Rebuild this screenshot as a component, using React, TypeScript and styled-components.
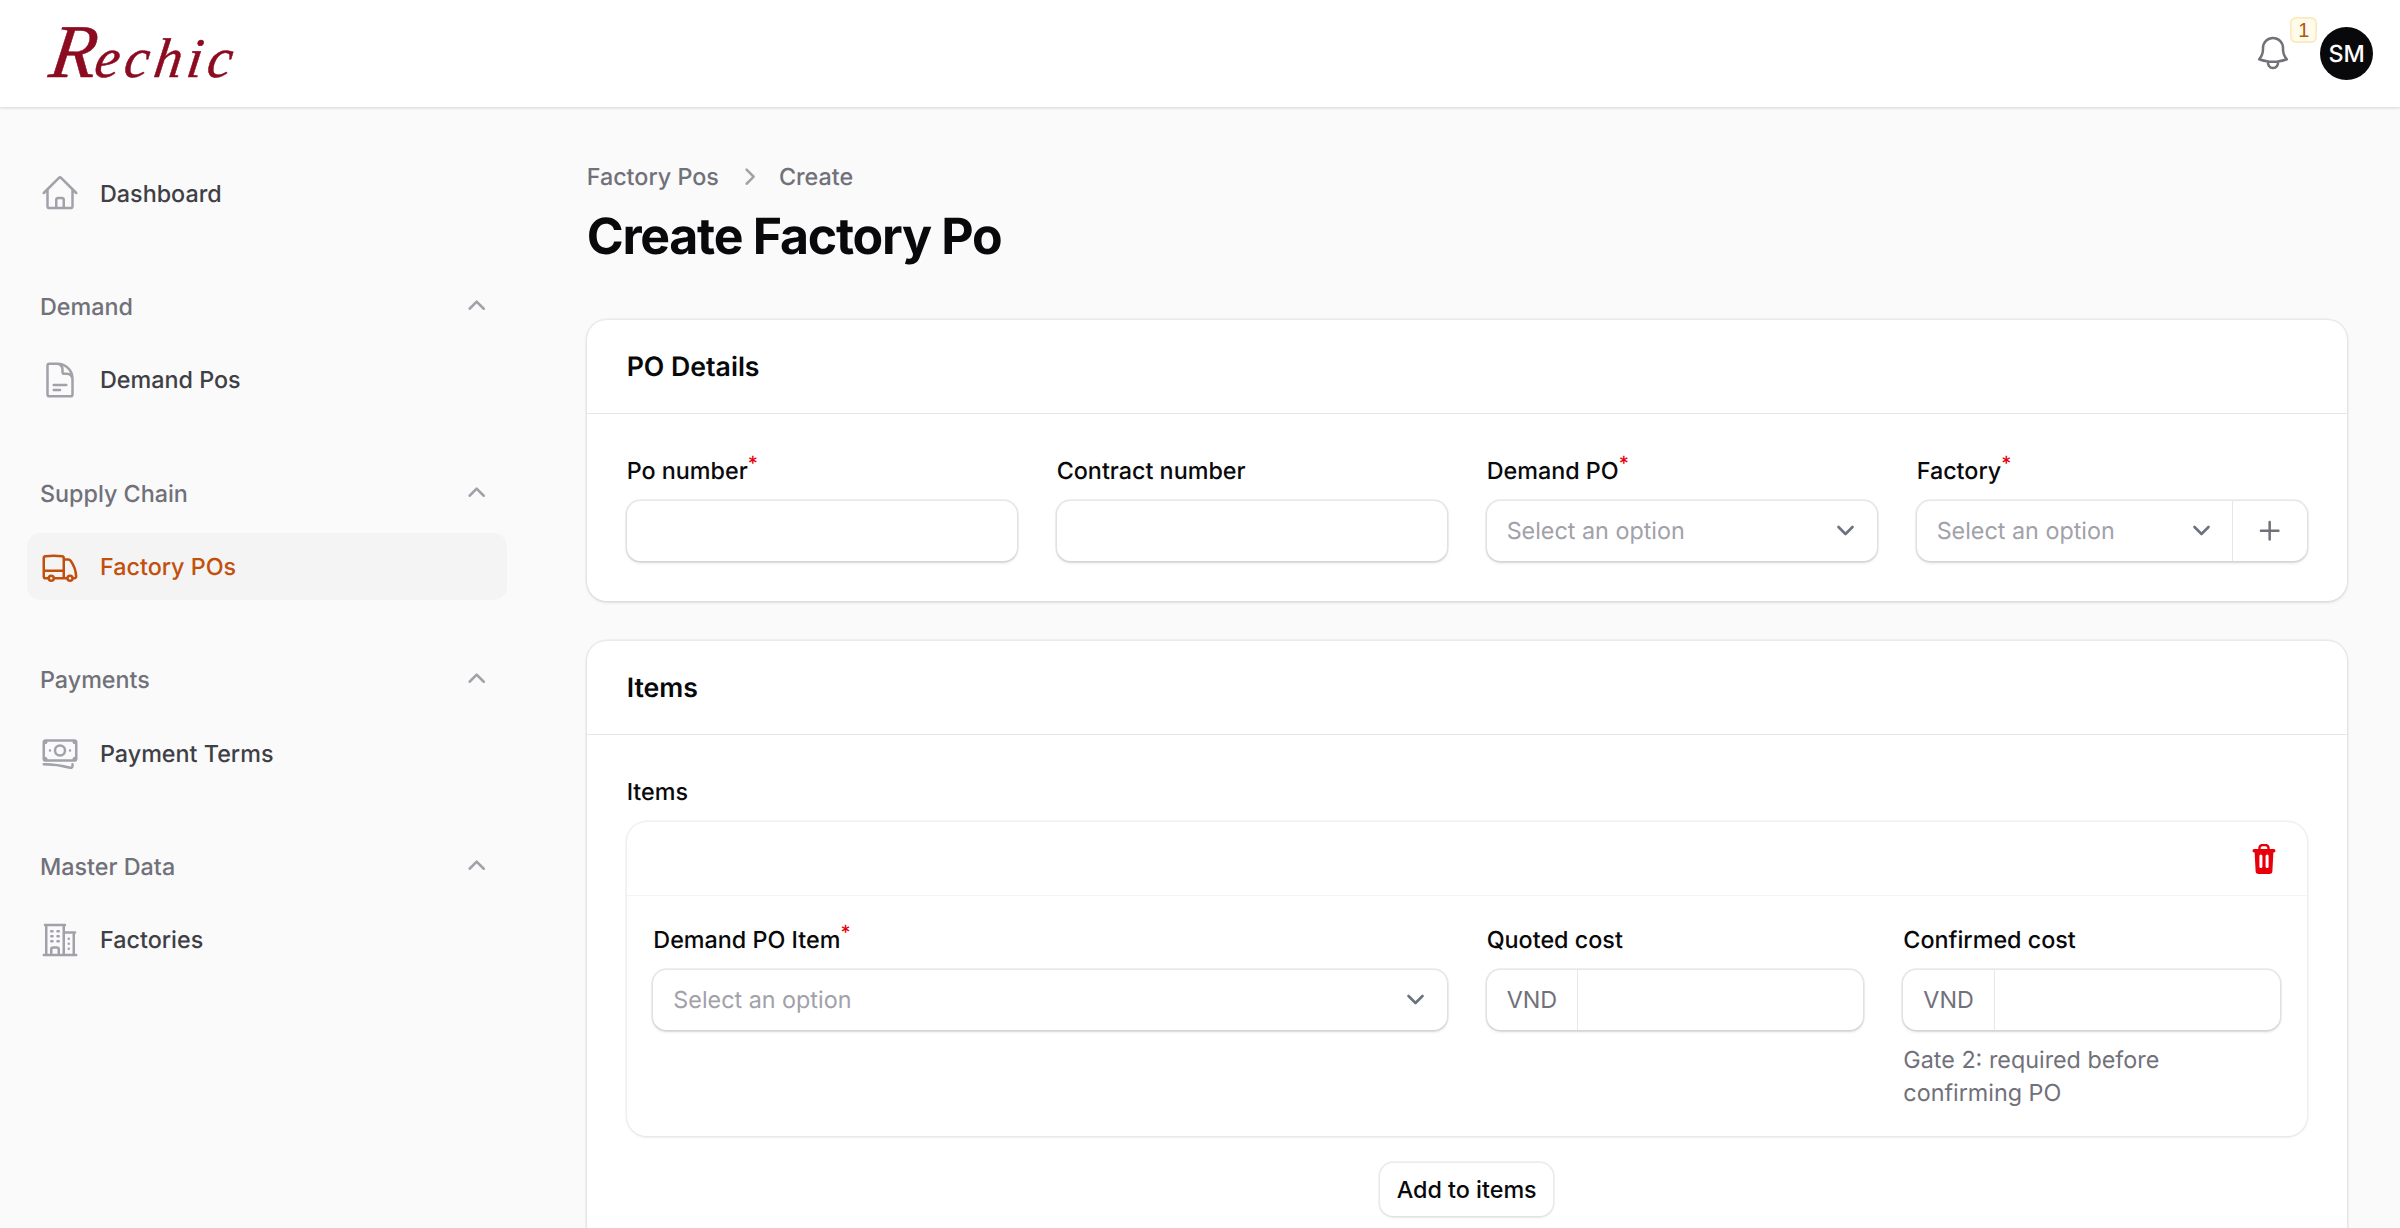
import React from 'react';
import styled, { createGlobalStyle } from 'styled-components';
import {
  HiOutlineHome,
  HiOutlineDocumentText,
  HiOutlineTruck,
  HiOutlineBanknotes,
  HiOutlineBuildingOffice2,
  HiOutlineBell,
  HiMiniChevronUp,
  HiMiniChevronRight,
  HiMiniPlus,
} from 'react-icons/hi2';

// The whole page is drawn at 5/3 scale, so 1rem here is 16 css px of the original.
const GlobalStyle = createGlobalStyle`
  html {
    font-size: 26.6667px;
  }
  body {
    margin: 0;
    background: #fafafa;
    font-family: Inter, "Noto Sans", sans-serif;
    color: #09090b;
    text-rendering: geometricPrecision;
    -webkit-font-smoothing: antialiased;
  }
  * {
    box-sizing: border-box;
  }
`;

const Page = styled.div`
  height: 100vh;
  overflow: hidden;
  display: flex;
  flex-direction: column;
`;

// Top bar with logo and the user actions.
const TopBar = styled.header`
  flex: none;
  height: 4rem;
  padding: 0 1rem 0 51px;
  display: flex;
  align-items: center;
  justify-content: space-between;
  background: white;
  box-shadow: 0 0 0 1.67px rgba(9, 9, 11, 0.05), 0 1.67px 3.3px rgba(0, 0, 0, 0.05);
  position: relative;
  z-index: 1;
`;

// No script face is installed, so the wordmark is set in a slanted serif with a tall capital.
const Logo = styled.span`
  display: flex;
  align-items: baseline;
  margin-top: -2px;
  font-family: "Liberation Serif", serif;
  font-style: italic;
  font-size: 56px;
  line-height: 1;
  letter-spacing: 4.8px;
  color: #8c0b20;
  -webkit-text-stroke: 0.5px #8c0b20;
  transform: skewX(-8deg);
`;

const LogoCapital = styled.span`
  font-size: 76px;
  letter-spacing: -1px;
`;

const TopActions = styled.div`
  display: flex;
  align-items: center;
  gap: 0.625rem;
`;

const BellButton = styled.button`
  position: relative;
  width: 2.25rem;
  height: 2.25rem;
  padding: 0;
  border: 0;
  background: none;
  display: flex;
  align-items: center;
  justify-content: center;
  color: #71717a;
  font-size: 1.5rem;
`;

const Badge = styled.span`
  position: absolute;
  top: -6px;
  right: -14px;
  width: 27px;
  height: 26px;
  display: flex;
  align-items: center;
  justify-content: center;
  border-radius: 6px;
  background: #fffbeb;
  box-shadow: inset 0 0 0 1.67px rgba(245, 158, 11, 0.2);
  color: #b45309;
  font-size: 0.75rem;
  font-weight: 500;
`;

const Avatar = styled.div`
  width: 2rem;
  height: 2rem;
  border-radius: 50%;
  background: #09090b;
  color: white;
  font-size: 0.875rem;
  font-weight: 500;
  display: flex;
  align-items: center;
  justify-content: center;
`;

const Body = styled.div`
  flex: 1;
  min-height: 0;
  display: flex;
`;

const Sidebar = styled.nav`
  flex: none;
  width: 20rem;
  padding: 2rem 1rem;
  display: flex;
  flex-direction: column;
  gap: 1.75rem;
`;

const NavGroup = styled.div`
  display: flex;
  flex-direction: column;
  gap: 0.25rem;
`;

const GroupLabel = styled.div`
  height: 2.5rem;
  padding-left: 0.5rem;
  display: flex;
  align-items: center;
  justify-content: space-between;
  font-size: 0.875rem;
  font-weight: 500;
  color: #71717a;
`;

const GroupToggle = styled.span`
  width: 2.25rem;
  display: flex;
  align-items: center;
  justify-content: center;
  font-size: 1.25rem;
  color: #a1a1aa;
`;

const NavItem = styled.a<{ $active?: boolean }>`
  height: 2.5rem;
  padding: 0 0.5rem;
  display: flex;
  align-items: center;
  gap: 0.75rem;
  border-radius: 0.5rem;
  font-size: 0.875rem;
  font-weight: 500;
  color: ${(p) => (p.$active ? '#c2500c' : '#3f3f46')};
  background: ${(p) => (p.$active ? '#f4f4f5' : 'transparent')};
  svg {
    flex: none;
    font-size: 1.5rem;
    color: ${(p) => (p.$active ? '#c2500c' : '#a1a1aa')};
  }
`;

const Main = styled.main`
  flex: 1;
  min-width: 0;
  padding: 2rem;
  display: flex;
  flex-direction: column;
`;

const Breadcrumbs = styled.div`
  display: flex;
  align-items: center;
  gap: 0.5rem;
  height: 1.25rem;
  font-size: 0.875rem;
  font-weight: 500;
  line-height: 1.25rem;
  color: #71717a;
  svg {
    font-size: 1.25rem;
    color: #a1a1aa;
  }
`;

const Title = styled.h1`
  margin: 0.5rem 0 2rem;
  font-size: 1.875rem;
  line-height: 2.25rem;
  font-weight: 700;
  letter-spacing: -0.025em;
  color: #09090b;
`;

const Cards = styled.div`
  display: flex;
  flex-direction: column;
  gap: 1.5rem;
`;

const Card = styled.section`
  flex: none;
  background: white;
  border-radius: 0.75rem;
  box-shadow: 0 0 0 1.67px rgba(9, 9, 11, 0.05), 0 1.67px 3.3px rgba(0, 0, 0, 0.08);
`;

const CardHeader = styled.h2`
  margin: 0;
  padding: 1rem 1.5rem;
  border-bottom: 1.67px solid #e6e6e8;
  font-size: 1rem;
  line-height: 1.5rem;
  font-weight: 600;
`;

const CardContent = styled.div`
  padding: 1.5rem;
`;

const FieldGrid = styled.div`
  display: grid;
  grid-template-columns: repeat(4, minmax(0, 1fr));
  gap: 1.5rem;
`;

const Field = styled.div<{ $span?: number }>`
  grid-column: span ${(p) => p.$span ?? 1};
  display: flex;
  flex-direction: column;
  gap: 0.5rem;
`;

const Label = styled.label`
  font-size: 0.875rem;
  line-height: 1.25rem;
  font-weight: 500;
  color: #09090b;
`;

const Required = styled.sup`
  color: #e7000b;
  font-weight: 500;
  line-height: 0;
`;

const InputWrap = styled.div`
  height: 2.25rem;
  display: flex;
  align-items: center;
  background: white;
  border-radius: 0.5rem;
  box-shadow: 0 0 0 1.67px rgba(9, 9, 11, 0.08), 0 1.67px 3.3px rgba(0, 0, 0, 0.12);
`;

const TextInput = styled.input`
  flex: 1;
  min-width: 0;
  height: 100%;
  padding: 0 0.75rem;
  border: 0;
  outline: 0;
  background: none;
  font: inherit;
  font-size: 0.875rem;
`;

const SelectBox = styled.div`
  flex: 1;
  min-width: 0;
  height: 100%;
  padding: 0 0.5rem 0 0.75rem;
  display: flex;
  align-items: center;
  justify-content: space-between;
  font-size: 0.875rem;
  color: #a1a1aa;
`;

const Chevron = styled.svg`
  flex: none;
  width: 1.3125rem;
  height: 1.3125rem;
`;

const Prefix = styled.span`
  flex: none;
  height: 100%;
  padding: 0 0.75rem;
  display: flex;
  align-items: center;
  border-right: 1.67px solid #e7e7e9;
  font-size: 0.875rem;
  color: #71717a;
`;

const Suffix = styled.span`
  flex: none;
  height: 100%;
  padding: 0 0.75rem;
  display: flex;
  align-items: center;
  border-left: 1.67px solid #e7e7e9;
  font-size: 1.25rem;
  color: #71717a;
`;

const Helper = styled.p`
  margin: 0;
  font-size: 0.875rem;
  line-height: 1.25rem;
  color: #71717a;
`;

const Repeater = styled.div`
  display: flex;
  flex-direction: column;
  gap: 0.5rem;
`;

const RepeaterItem = styled.div`
  background: white;
  border-radius: 0.75rem;
  box-shadow: 0 0 0 1.67px rgba(9, 9, 11, 0.05), 0 1.67px 3.3px rgba(0, 0, 0, 0.04);
`;

const RepeaterHeader = styled.div`
  height: 2.75rem;
  box-sizing: content-box;
  padding: 0 1rem;
  display: flex;
  align-items: center;
  justify-content: flex-end;
  border-bottom: 1.67px solid #f4f4f5;
`;

const TrashIcon = styled.svg`
  display: block;
  width: 24px;
  height: 30px;
  margin-right: 4px;
`;

const RepeaterContent = styled.div`
  padding: 1rem;
`;

const AddRow = styled.div`
  margin-top: 0.5rem;
  display: flex;
  justify-content: center;
`;

const AddButton = styled.button`
  height: 2rem;
  padding: 0 0.625rem;
  border: 0;
  border-radius: 0.5rem;
  background: white;
  box-shadow: 0 0 0 1.67px rgba(9, 9, 11, 0.07), 0 1.67px 3.3px rgba(0, 0, 0, 0.05);
  font: inherit;
  font-size: 0.875rem;
  font-weight: 500;
  color: #09090b;
`;

const SelectChevron = () => (
  <Chevron viewBox="0 0 20 20" fill="none">
    <path d="m6 8 4 4 4-4" stroke="#6b7280" strokeWidth="1.5" strokeLinecap="round" strokeLinejoin="round" />
  </Chevron>
);

const Trash = () => (
  <TrashIcon viewBox="0 0 24 30" fill="#e7000b">
    <path d="M7.5 6V4a3 3 0 0 1 3-3h3a3 3 0 0 1 3 3v2" fill="none" stroke="#e7000b" strokeWidth="2.4" />
    <rect x="0.5" y="5" width="23" height="3.4" rx="1.7" />
    <path d="M2.6 8h18.8l-1 19a3 3 0 0 1-3 3H6.6a3 3 0 0 1-3-3z" />
    <rect x="7.4" y="10.5" width="3" height="13.5" rx="1.5" fill="white" />
    <rect x="13.6" y="10.5" width="3" height="13.5" rx="1.5" fill="white" />
  </TrashIcon>
);

const navGroups = [
  { label: 'Demand', items: [{ text: 'Demand Pos', icon: <HiOutlineDocumentText /> }] },
  { label: 'Supply Chain', items: [{ text: 'Factory POs', icon: <HiOutlineTruck />, active: true }] },
  { label: 'Payments', items: [{ text: 'Payment Terms', icon: <HiOutlineBanknotes /> }] },
  { label: 'Master Data', items: [{ text: 'Factories', icon: <HiOutlineBuildingOffice2 /> }] },
];

const App: React.FC = () => (
  <Page>
    <GlobalStyle />
    <TopBar>
      <Logo>
        <LogoCapital>R</LogoCapital>echic
      </Logo>
      <TopActions>
        <BellButton aria-label="Notifications">
          <HiOutlineBell />
          <Badge>1</Badge>
        </BellButton>
        <Avatar>SM</Avatar>
      </TopActions>
    </TopBar>
    <Body>
      <Sidebar>
        <NavGroup>
          <NavItem>
            <HiOutlineHome />
            Dashboard
          </NavItem>
        </NavGroup>
        {navGroups.map((group) => (
          <NavGroup key={group.label}>
            <GroupLabel>
              {group.label}
              <GroupToggle>
                <HiMiniChevronUp />
              </GroupToggle>
            </GroupLabel>
            {group.items.map((item) => (
              <NavItem key={item.text} $active={item.active}>
                {item.icon}
                {item.text}
              </NavItem>
            ))}
          </NavGroup>
        ))}
      </Sidebar>
      <Main>
        <Breadcrumbs>
          <span>Factory Pos</span>
          <HiMiniChevronRight />
          <span>Create</span>
        </Breadcrumbs>
        <Title>Create Factory Po</Title>
        <Cards>
          <Card>
            <CardHeader>PO Details</CardHeader>
            <CardContent>
              <FieldGrid>
                <Field>
                  <Label>
                    Po number<Required>*</Required>
                  </Label>
                  <InputWrap>
                    <TextInput />
                  </InputWrap>
                </Field>
                <Field>
                  <Label>Contract number</Label>
                  <InputWrap>
                    <TextInput />
                  </InputWrap>
                </Field>
                <Field>
                  <Label>
                    Demand PO<Required>*</Required>
                  </Label>
                  <InputWrap>
                    <SelectBox>
                      Select an option
                      <SelectChevron />
                    </SelectBox>
                  </InputWrap>
                </Field>
                <Field>
                  <Label>
                    Factory<Required>*</Required>
                  </Label>
                  <InputWrap>
                    <SelectBox>
                      Select an option
                      <SelectChevron />
                    </SelectBox>
                    <Suffix>
                      <HiMiniPlus />
                    </Suffix>
                  </InputWrap>
                </Field>
              </FieldGrid>
            </CardContent>
          </Card>
          <Card>
            <CardHeader>Items</CardHeader>
            <CardContent>
              <Repeater>
                <Label>Items</Label>
                <RepeaterItem>
                  <RepeaterHeader>
                    <Trash />
                  </RepeaterHeader>
                  <RepeaterContent>
                    <FieldGrid>
                      <Field $span={2}>
                        <Label>
                          Demand PO Item<Required>*</Required>
                        </Label>
                        <InputWrap>
                          <SelectBox>
                            Select an option
                            <SelectChevron />
                          </SelectBox>
                        </InputWrap>
                      </Field>
                      <Field>
                        <Label>Quoted cost</Label>
                        <InputWrap>
                          <Prefix>VND</Prefix>
                          <TextInput />
                        </InputWrap>
                      </Field>
                      <Field>
                        <Label>Confirmed cost</Label>
                        <InputWrap>
                          <Prefix>VND</Prefix>
                          <TextInput />
                        </InputWrap>
                        <Helper>Gate 2: required before confirming PO</Helper>
                      </Field>
                    </FieldGrid>
                  </RepeaterContent>
                </RepeaterItem>
                <AddRow>
                  <AddButton>Add to items</AddButton>
                </AddRow>
              </Repeater>
            </CardContent>
          </Card>
        </Cards>
      </Main>
    </Body>
  </Page>
);

export default App;
